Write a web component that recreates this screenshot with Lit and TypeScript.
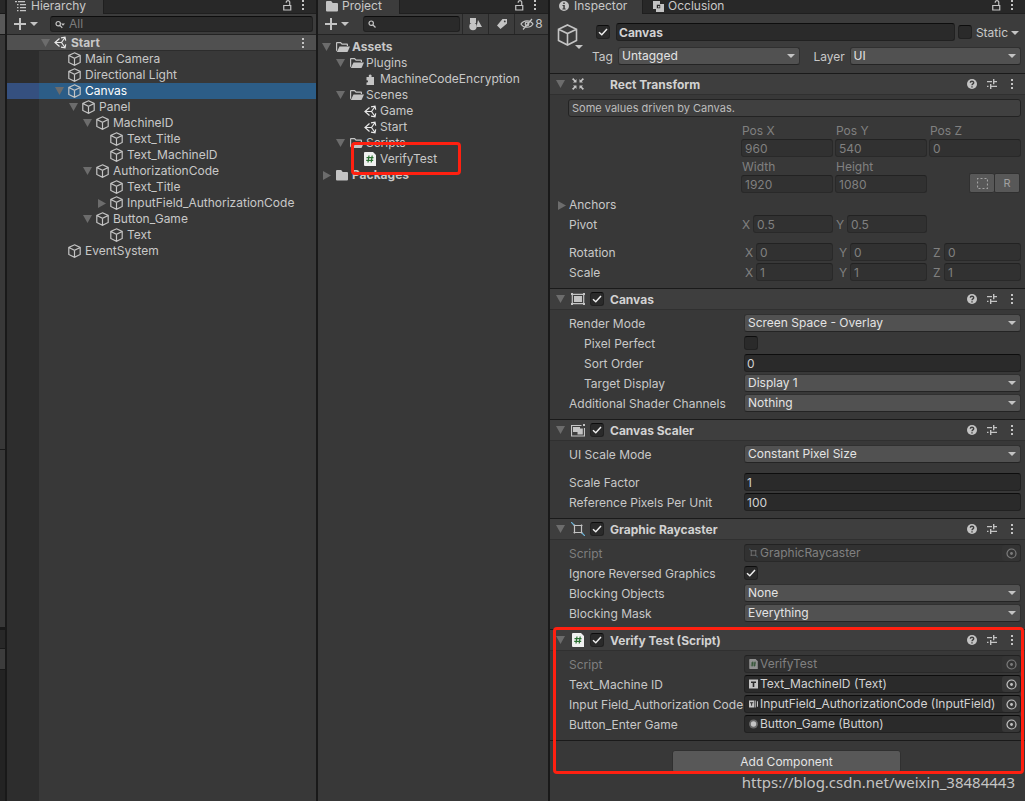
import { LitElement, html, css, nothing, TemplateResult } from "lit";
import { customElement } from "lit/decorators.js";
import { classMap } from "lit/directives/class-map.js";

const icons: Record<string, () => TemplateResult> = {
  down: () => html`<svg class="ico fold" width="9" height="8" viewBox="0 0 9 8"><path d="M0 0h9L4.5 8z" /></svg>`,
  right: () => html`<svg class="ico fold" width="9" height="9" viewBox="0 0 9 9"><path d="M1 0v9l8-4.500z" /></svg>`,
  caret: () => html`<svg class="ico caret" width="8" height="4" viewBox="0 0 8 4"><path d="M0 0h8L4 4z" /></svg>`,
  plus: () => html`<svg class="ico" width="12" height="12" viewBox="0 0 12 12"><path d="M5 0h2v5h5v2H7v5H5V7H0V5h5z" /></svg>`,
  kebab: () => html`<svg class="ico" width="4" height="12" viewBox="0 0 4 12"><path d="M1 1h2v2H1zM1 5h2v2H1zM1 9h2v2H1z" /></svg>`,
  lock: () => html`<svg class="ico line" width="9" height="11" viewBox="0 0 9 11"><path d="M.75 5.500h7v4.500h-7zM6.750 5.500V2a1.800 1.800 0 0 0-3.500 0v.8" /></svg>`,
  list: () => html`<svg class="ico" width="11" height="11" viewBox="0 0 11 11"><path d="M0 0h2v1.200H0zM3 0h7v1.200H3zM2 3h1.500v1.200H2zM5 3h6v1.200H5zM2 6h1.500v1.200H2zM5 6h6v1.200H5zM2 9h1.500v1.200H2zM5 9h6v1.200H5z" /></svg>`,
  search: () => html`<svg class="ico line" width="9" height="9" viewBox="0 0 9 9"><circle cx="3.200" cy="3.200" r="2.200" /><path d="M5 5l2.500 2.500" /></svg>`,
  searchMenu: () => html`<svg class="ico line" width="10" height="9" viewBox="0 0 10 9"><circle cx="3.200" cy="3.700" r="2.200" /><path d="M5 5.500l2.300 2.300" /><path class="solid" d="M6 3.500h4L8 5.700z" /></svg>`,
  cube: () => html`<svg class="ico line" width="13" height="14" viewBox="0 0 13 14"><path d="M6.500 .8l5.700 2.700v7L6.500 13.300 .8 10.500v-7zM.8 3.500l5.700 2.800 5.700-2.800M6.500 6.300v7" /></svg>`,
  bigCube: () => html`<svg class="ico line" width="21" height="22" viewBox="0 0 21 22"><path stroke-width="1.600" d="M10.500 1l9 4.300v11.200l-9 4.500-9-4.500V5.300zM1.500 5.300l9 4.200 9-4.200M10.500 9.500V21" /></svg>`,
  unity: () => html`<svg class="ico unity" width="13" height="13" viewBox="0 0 13 13"><path d="M5.500 2.500L1 6.500l4.500 4M1 6.500h6.500L11 1.500M7.500 6.500L11 11.500M7 1.800l4-.6.700 3.500M7 11.200l4 .6.700-3.500" /></svg>`,
  folder: () => html`<svg class="ico" width="13" height="12" viewBox="0 0 13 12"><path d="M1 1h4.200l1.500 2H11a1 1 0 0 1 1 1v6.500a1 1 0 0 1-1 1H1a1 1 0 0 1-1-1V2a1 1 0 0 1 1-1z" /></svg>`,
  folderOpen: () => html`<svg class="ico" width="14" height="12" viewBox="0 0 14 12"><path d="M1 1h3.800l1.500 1.600H11a1 1 0 0 1 1 1V5h-1.200V3.800h-5L4.300 2.200H1.200V9L0 10.500V2a1 1 0 0 1 1-1z" /><path d="M3.500 5.500H14L11.500 11H.8z" /></svg>`,
  puzzle: () => html`<svg class="ico" width="13" height="13" viewBox="0 0 13 13"><path d="M2.500 4H5c-.7-1.400 0-2.500 1.200-2.500S8.100 2.600 7.400 4H10v8H2.500V9.500c1.900.5 2.300-2.600 0-2.200z" /></svg>`,
  script: () => html`<svg class="ico" width="12" height="14" viewBox="0 0 12 14"><path class="paper" d="M1 0h8l3 3v11H1a1 1 0 0 1-1-1V1a1 1 0 0 1 1-1z" /><path class="hash" d="M5 3.500L4 10.500M8.200 3.500l-1 7M2.500 5.700h7M2.200 8.400h7" /></svg>`,
  shapes: () => html`<svg class="ico" width="13" height="14" viewBox="0 0 13 14"><path d="M1 1h6v5H1zM9 3l4 7H7.500z" /><circle cx="4" cy="9.500" r="3.700" /></svg>`,
  tag: () => html`<svg class="ico" width="12" height="12" viewBox="0 0 12 12"><path fill-rule="evenodd" d="M6.500 1H11v4.500L4.500 11 1 7.500zM8.700 2.500a.9.900 0 1 0 .1 1.800.9.900 0 0 0 0-1.800z" /></svg>`,
  eyeOff: () => html`<svg class="ico line" width="14" height="12" viewBox="0 0 14 12"><path d="M1 6c2.500-4.300 9.500-4.300 12 0-2.500 4.300-9.500 4.300-12 0zM12 1L3 11.500" /><circle cx="7" cy="6" r="1.800" /></svg>`,
  info: () => html`<svg class="ico" width="10" height="10" viewBox="0 0 10 10"><path fill-rule="evenodd" d="M5 0a5 5 0 1 0 0 10A5 5 0 0 0 5 0zM4.200 1.500h1.600v1.600H4.200zM3.500 4h2.300v3.500h.9v1H3.400v-1h.9V5h-.8z" /></svg>`,
  occlusion: () => html`<svg class="ico" width="11" height="11" viewBox="0 0 11 11"><path fill-rule="evenodd" d="M0 0h7v3h4v8H3V8H0zM3.800 3.800v3.400h3.400V3.800z" /><path d="M5 5h1.500v1.500H5z" /></svg>`,
  help: () => html`<svg class="ico" width="10" height="10" viewBox="0 0 10 10"><circle cx="5" cy="5" r="5" /><path class="ink" d="M3.300 3.800C3.300 1.700 6.700 1.800 6.700 3.700 6.700 4.900 5 4.800 5 6.200M5 7.200v1.300" /></svg>`,
  sliders: () => html`<svg class="ico" width="10" height="10" viewBox="0 0 10 10"><path d="M0 2h5v1.200H0zM6 0h1.400v2H10v1.200H7.400v2H6zM0 6.800h1.500V8H0zM3 5h1.400v1.800H10V8H4.400v2H3z" /></svg>`,
  rect: () => html`<svg class="ico" width="14" height="14" viewBox="0 0 14 14"><path d="M5.500 5.500H2l1.200-1.200L1 2.300 2.300 1l2 2.200L5.500 2zM8.500 5.500V2l1.200 1.200 2-2.200L13 2.300l-2.200 2L12 5.500zM5.500 8.500V12l-1.200-1.200-2 2.200L1 11.700l2.200-2L2 8.500zM8.500 8.500H12l-1.200 1.200 2.200 2-1.300 1.300-2-2.200L8.500 12z" /></svg>`,
  canvas: () => html`<svg class="ico" width="14" height="12" viewBox="0 0 14 12"><path d="M3 3h8v6H3z" /><path fill-rule="evenodd" d="M0 0h2v.7h10V0h2v2h-.7v8h.7v2h-2v-.7H2v.7H0v-2h.7V2H0zM1.900 1.900v8.200h10.200V1.900z" /></svg>`,
  scaler: () => html`<svg class="ico" width="14" height="13" viewBox="0 0 14 13"><path fill-rule="evenodd" d="M0 1h10.500v1.100H1.100v9.300h11.800V4H14v8.500H0z" /><path d="M2 3h7v1.500h2.800v6H6.500V8H2z" /><path d="M12 0h2v2h-2z" /></svg>`,
  raycaster: () => html`<svg class="ico line" width="14" height="14" viewBox="0 0 14 14"><path d="M2.500 3.500h9M2.500 10.500h9M3.500 2.500v9M10.500 2.500v9" /><path class="blue" d="M0 0l3 3M11 11l3 3" /></svg>`,
  text: () => html`<svg class="ico" width="9" height="9" viewBox="0 0 9 9"><path fill-rule="evenodd" d="M0 0h9v9H0zM2 2v1.400h1.700V7.500h1.600V3.400H7V2z" /></svg>`,
  input: () => html`<svg class="ico" width="9" height="9" viewBox="0 0 10 8"><path fill-rule="evenodd" d="M0 0h6v8H0zM1.200 2v1.200h1.200V6h1.100V3.200h1.200V2z" /><path d="M7 0h.8v8H7zM8.800 1H10v6H8.800z" /></svg>`,
  button: () => html`<svg class="ico" width="9" height="9" viewBox="0 0 9 9"><circle class="halo" cx="4.500" cy="4.500" r="4.500" /><circle cx="4.500" cy="4.500" r="2.700" /></svg>`,
  picker: () => html`<svg class="ico line" width="11" height="11" viewBox="0 0 11 11"><circle cx="5.500" cy="5.500" r="4.500" /><circle class="solid" cx="5.500" cy="5.500" r="1.400" /></svg>`,
  dashed: () => html`<svg class="ico line" width="11" height="11" viewBox="0 0 11 11"><path stroke-dasharray="2 2" d="M.5 1.500v-1h10v10H.5z" /></svg>`,
};

interface Node {
  name: string;
  depth: number;
  icon: string;
  fold?: "down" | "right";
  kind?: string;
}

const hierarchy: Node[] = [
  { name: "Start", depth: 0, icon: "unity", fold: "down", kind: "scene" },
  { name: "Main Camera", depth: 1, icon: "cube" },
  { name: "Directional Light", depth: 1, icon: "cube" },
  { name: "Canvas", depth: 1, icon: "cube", fold: "down", kind: "selected" },
  { name: "Panel", depth: 2, icon: "cube", fold: "down" },
  { name: "MachineID", depth: 3, icon: "cube", fold: "down" },
  { name: "Text_Title", depth: 4, icon: "cube" },
  { name: "Text_MachineID", depth: 4, icon: "cube" },
  { name: "AuthorizationCode", depth: 3, icon: "cube", fold: "down" },
  { name: "Text_Title", depth: 4, icon: "cube" },
  { name: "InputField_AuthorizationCode", depth: 4, icon: "cube", fold: "right" },
  { name: "Button_Game", depth: 3, icon: "cube", fold: "down" },
  { name: "Text", depth: 4, icon: "cube" },
  { name: "EventSystem", depth: 1, icon: "cube" },
];

const assets: Node[] = [
  { name: "Assets", depth: 0, icon: "folderOpen", fold: "down", kind: "top" },
  { name: "Plugins", depth: 1, icon: "folderOpen", fold: "down" },
  { name: "MachineCodeEncryption", depth: 2, icon: "puzzle" },
  { name: "Scenes", depth: 1, icon: "folderOpen", fold: "down" },
  { name: "Game", depth: 2, icon: "unity" },
  { name: "Start", depth: 2, icon: "unity" },
  { name: "Scripts", depth: 1, icon: "folderOpen", fold: "down" },
  { name: "VerifyTest", depth: 2, icon: "script", kind: "marked" },
  { name: "Packages", depth: 0, icon: "folder", fold: "right", kind: "top" },
];

@customElement("app-root")
export class AppRoot extends LitElement {
  static styles = css`
    :host {
      display: block;
      height: 100vh;
      overflow: hidden;
      background: #191919;
      color: #c8c8c8;
      font: 12px/16px Inter, "Liberation Sans", sans-serif;
    }
    * { box-sizing: border-box; }
    button, input, select { font: inherit; color: inherit; margin: 0; padding: 0; border: 0; background: none; border-radius: 3px; min-width: 0; }
    .ico { display: block; flex: none; fill: #c4c4c4; }
    .ico.fold { fill: #6c6c6c; }
    .ico.line { fill: none; stroke: #c4c4c4; stroke-width: 1.2; }
    .ico.unity { fill: none; stroke: #e8e8e8; stroke-width: 1.2; }
    .ico .solid { fill: #c4c4c4; stroke: none; }
    .paper { fill: #f0f0f0; }
    .hash { fill: none; stroke: #2b7032; stroke-width: 1.2; }
    .ink { fill: none; stroke: #3e3e3e; stroke-width: 1.4; }
    .blue { stroke: #6cb4d8; }
    .halo { opacity: 0.4; }

    .editor { display: grid; height: 100%; column-gap: 2px; grid-template-columns: 5px minmax(0, 309fr) minmax(0, 230fr) minmax(0, 475fr); }
    .panel { display: flex; flex-direction: column; min-width: 0; background: #383838; position: relative; }

    .edge { display: flex; flex-direction: column; gap: 1px; }
    .edge div { background: #383838; }
    .edge .e-tab { height: 13px; background: #282828; }
    .edge .e-bar { height: 20px; background: #585858; }
    .edge .e-mid { flex: 413; }
    .edge .e-low { flex: 177; margin-bottom: 2px; }
    .edge .e-tab2 { height: 18px; background: #282828; }
    .edge .e-bar2 { height: 20px; background: #3c3c3c; }
    .edge .e-end { flex: 131; background: #232323; }

    .tabs { display: flex; flex: none; height: 14px; background: #282828; border-bottom: 1px solid #1f1f1f; line-height: 12px; }
    .tab { display: flex; align-items: center; gap: 6px; height: 14px; padding-bottom: 2px; }
    .tab.on { background: #3c3c3c; border-right: 1px solid #1f1f1f; }
    .tab.hier { width: 97px; padding-left: 8px; gap: 5px; }
    .tab.proj { width: 82px; padding-left: 8px; gap: 3px; }
    .tab.insp { width: 93px; padding-left: 9px; gap: 5px; }
    .tab.occ { padding-left: 10px; gap: 4px; }
    .tools { display: flex; align-items: center; gap: 9px; margin-left: auto; padding: 0 11px 3px 0; }
    .tools button, .bar button { display: flex; align-items: center; }

    .bar { display: flex; flex: none; align-items: center; height: 21px; background: #3c3c3c; border-bottom: 1px solid #232323; padding-left: 7px; }
    .add { gap: 4px; flex: none; }
    .search { display: flex; align-items: center; gap: 4px; flex: 1; min-width: 0; height: 16px; padding-left: 4px; background: #2a2a2a; border: 1px solid #212121; border-top-color: #0d0d0d; border-radius: 3px; }
    .search input { flex: 1; line-height: 14px; }
    .search input::placeholder { color: #7c7c7c; opacity: 1; }
    .hier-search { margin: 0 3px 0 12px; }
    .proj-search { margin: 0 2px 0 14px; }
    .bar .tool { justify-content: center; flex: none; width: 26px; height: 20px; border-left: 1px solid #282828; border-radius: 0; }
    .bar .tool.wide { width: 34px; gap: 1px; }

    .tree { margin: 0; padding: 0; list-style: none; }
    .tree.fill { flex: 1; background: linear-gradient(to right, #2d2d2d 32px, transparent 32px); }
    .tree.assets { padding-top: 4px; }
    .node { display: flex; align-items: center; height: 16px; padding-right: 11px; position: relative; white-space: nowrap; }
    .gutter { flex: none; width: 34px; height: 16px; }
    .tree.assets .gutter { width: 4px; }
    .arrow { flex: none; width: 13px; }
    .tree.assets .arrow { width: 14px; }
    .pic { display: flex; flex: none; width: 17px; }
    .tree.assets .pic { width: 16px; }
    .node .kebab { margin-left: auto; }
    .scene { background: #505050; font-weight: 700; border-bottom: 1px solid #2c2c2c; }
    .top { font-weight: 700; }
    .selected { background: linear-gradient(to right, #35507f 32px, #2c5d87 32px); color: #fff; }
    .mark { position: absolute; border: 3px solid #ff2010; border-radius: 4px; pointer-events: none; z-index: 2; }
    .marked .mark { left: 33px; top: -9px; width: 110px; height: 33px; }
    .region { position: relative; }
    .region .mark { inset: -2px 1px auto 3px; height: 147px; }

    .head { display: flex; flex: none; gap: 7px; height: 59px; padding: 9px 4px 0 7px; background: #3c3c3c; }
    .head-icon { display: flex; flex-direction: column; align-items: flex-end; flex: none; width: 26px; padding-top: 1px; }
    .head-icon .ico.line { margin-right: auto; }
    .head-icon .caret { margin-top: -1px; }
    .head-main { display: flex; flex-direction: column; gap: 6px; flex: 1; min-width: 0; }
    .head-row { display: flex; align-items: center; height: 18px; }
    .head-row .name { flex: 1; margin: 0 3px 0 6px; padding-left: 2px; font-weight: 700; }
    .head-row .first { margin-left: 6px; }
    .head-row .static { display: flex; align-items: center; gap: 3px; margin-left: 4px; padding: 1px 2px 0 0; }
    .head-row .cap { flex: none; padding: 1px 0 0 2px; width: 28px; }
    .head-row .cap.layer { margin-left: 14px; padding-left: 0; width: 36px; }
    .head-row .pick { flex: 181; }
    .head-row .pick.narrow { flex: 171; }

    .check { appearance: none; flex: none; width: 14px; height: 14px; background: #2a2a2a; border: 1px solid #212121; border-top-color: #0d0d0d; border-radius: 3px; }
    .check:checked { background: #2a2a2a url('data:image/svg+xml,<svg xmlns="http://www.w3.org/2000/svg" viewBox="0 0 12 12"><path d="M2 6.200l2.800 2.600L10 3" fill="none" stroke="%23eee" stroke-width="1.500"/></svg>') center / 12px 12px no-repeat; }
    .field { width: 100%; height: 18px; padding: 0 2px; line-height: 16px; background: #2a2a2a; border: 1px solid #212121; border-top-color: #0d0d0d; border-radius: 3px; color: #d2d2d2; }
    .field:disabled { padding: 0 3px; background: #313131; border-color: #292929; border-top-color: #222; color: #808080; }
    .pick { display: grid; align-items: center; width: 100%; height: 18px; }
    .pick select { grid-area: 1 / 1; appearance: none; width: 100%; height: 18px; padding: 0 20px 1px 3px; line-height: 14px; background: #515151; border: 1px solid #303030; border-bottom-color: #242424; color: #e4e4e4; }
    .pick .caret { grid-area: 1 / 1; justify-self: end; margin-right: 5px; pointer-events: none; }

    .comp { border-top: 1px solid #1a1a1a; }
    .comp-head { display: flex; align-items: center; height: 21px; padding: 0 3px 0 6px; background: #3e3e3e; border-bottom: 1px solid #303030; }
    .comp-head .kind { display: flex; justify-content: center; width: 14px; margin: 0 5px 0 6px; }
    .comp-head .slot { width: 14px; height: 14px; }
    .comp-head h2 { margin: 0 auto 0 6px; padding-top: 2px; font: inherit; font-weight: 700; color: #d2d2d2; }
    .comp-head button { display: flex; justify-content: center; width: 20px; }
    .comp-body { padding: 3px 4px 6px 19px; }
    .row { display: grid; grid-template-columns: minmax(0, 175fr) minmax(0, 277fr); align-items: center; height: 20px; white-space: nowrap; }
    .row.sub > :first-child { padding-left: 15px; }
    .row.gap { margin-top: 8px; }
    .row.dim > label { color: #7f7f7f; }
    .row label { padding-top: 1px; }
    .object { display: flex; align-items: center; height: 18px; padding-left: 3px; background: #2a2a2a; border: 1px solid #212121; border-top-color: #0d0d0d; border-radius: 3px; color: #d2d2d2; }
    .object .ref { display: flex; justify-content: center; flex: none; width: 10px; margin-right: 2px; }
    .object .ref .ico { width: 9px; height: 10px; }
    .object input { flex: 1; line-height: 16px; }
    .object button { display: flex; align-items: center; justify-content: center; flex: none; width: 18px; height: 16px; background: #373737; }
    .dim .object { background: #313131; border-color: #292929; border-top-color: #222; color: #808080; }
    .dim .object .ico { opacity: 0.5; }
    .dim .object button { background: #343434; }

    .comp-body.rect { padding-top: 4px; }
    .notice { height: 18px; margin: 0 0 6px; padding: 0 3px; font-size: 11px; line-height: 17px; background: #404040; border: 1px solid #232323; border-radius: 3px; margin-left: -1px; color: #bdbdbd; }
    .grid { display: grid; grid-template-columns: minmax(0, 172fr) repeat(3, minmax(0, 92fr)); column-gap: 2px; margin-left: -2px; }
    .grid .cell { display: flex; flex-direction: column; color: #808080; }
    .grid .cell.lower { padding-top: 2px; }
    .grid .cell label { height: 16px; padding-left: 1px; }
    .grid .first { grid-column: 2; }
    .modes { display: flex; justify-content: flex-end; align-items: flex-end; padding-right: 1px; }
    .modes button { display: flex; align-items: center; justify-content: center; width: 26px; height: 20px; background: #585858; border: 1px solid #303030; border-radius: 2px; color: #a0a0a0; font-size: 11px; }
    .modes button:first-child { width: 25px; border-right: 0; }
    .modes .ico { opacity: 0.7; }
    .anchors { display: flex; align-items: center; gap: 3px; height: 20px; margin: 1px 0 0 -12px; padding-top: 2px; }
    .axes { display: grid; grid-template-columns: minmax(0, 172fr) repeat(3, minmax(0, 92fr)); column-gap: 2px; margin-left: -2px; align-items: center; height: 20px; }
    .axes.gap { margin-top: 8px; }
    .axes .title { padding: 2px 0 0 2px; }
    .axis { display: flex; align-items: center; color: #808080; }
    .axis label { flex: none; width: 12px; padding: 1px 0 0 1px; }
    .axes.inset .axis label { width: 15px; padding-left: 4px; }

    .footer { display: flex; justify-content: center; padding: 9px 2px 0 0; border-top: 1px solid #1a1a1a; }
    .footer button { width: 229px; height: 23px; background: #585858; border: 1px solid #303030; color: #e4e4e4; }
    .credit { position: absolute; right: 10px; bottom: 8px; z-index: 3; font: 15px/22px "Noto Sans", sans-serif; color: #c4c4c4; white-space: nowrap; }
  `;

  private icon(name: string) {
    return icons[name]();
  }

  private node(n: Node) {
    return html`<li class="node ${n.kind ?? ""}">
      <span class="gutter"></span>
      <span style="width:${n.depth * 14}px"></span>
      <span class="arrow">${n.fold ? this.icon(n.fold) : nothing}</span>
      <span class="pic">${this.icon(n.icon)}</span>
      <span>${n.name}</span>
      ${n.kind === "scene" ? html`<span class="kebab">${this.icon("kebab")}</span>` : nothing}
      ${n.kind === "marked" ? html`<span class="mark"></span>` : nothing}
    </li>`;
  }

  private tools() {
    return html`<div class="tools">
      <button aria-label="Lock">${this.icon("lock")}</button>
      <button aria-label="Panel menu">${this.icon("kebab")}</button>
    </div>`;
  }

  private select(id: string, value: string, extra = "") {
    return html`<div class="pick ${extra}">
      <select id=${id}><option>${value}</option></select>
      ${this.icon("caret")}
    </div>`;
  }

  private id(label: string, scope: string) {
    return `${scope}-${label.toLowerCase().replace(/\W+/g, "-")}`;
  }

  private row(scope: string, label: string, control: (id: string) => TemplateResult, mods = "") {
    const id = this.id(label, scope);
    return html`<div class="row ${mods}"><label for=${id}>${label}</label>${control(id)}</div>`;
  }

  private object(icon: string, value: string) {
    return (id: string) => html`<div class="object">
      <span class="ref">${this.icon(icon)}</span>
      <input id=${id} readonly .value=${value} />
      <button aria-label="Select object">${this.icon("picker")}</button>
    </div>`;
  }

  private choice(value: string) {
    return (id: string) => this.select(id, value);
  }

  private field(value: string) {
    return (id: string) => html`<input class="field" id=${id} .value=${value} />`;
  }

  private toggle(on: boolean) {
    return (id: string) => html`<input class="check" type="checkbox" id=${id} .checked=${on} />`;
  }

  private component(title: string, icon: string, body: TemplateResult, toggle = true, mods = {}) {
    return html`<section class="comp">
      <header class="comp-head">
        ${this.icon("down")}
        <span class="kind">${this.icon(icon)}</span>
        ${toggle
          ? html`<input class="check" type="checkbox" aria-label="Enable ${title}" .checked=${true} />`
          : html`<span class="slot"></span>`}
        <h2>${title}</h2>
        <button aria-label="Help">${this.icon("help")}</button>
        <button aria-label="Presets">${this.icon("sliders")}</button>
        <button aria-label="More">${this.icon("kebab")}</button>
      </header>
      <div class="comp-body ${classMap(mods)}">${body}</div>
    </section>`;
  }

  private cell(label: string, value: string, mods = "") {
    const id = this.id(label, "rect");
    return html`<div class="cell ${mods}"><label for=${id}>${label}</label>
      <input class="field" id=${id} disabled .value=${value} /></div>`;
  }

  private axes(title: string, values: string[], mods = "") {
    return html`<div class="axes ${mods}"><span class="title">${title}</span>
      ${values.map((v, i) => {
        const id = this.id("XYZ"[i], title);
        return html`<div class="axis"><label for=${id}>${"XYZ"[i]}</label><input class="field" id=${id} disabled .value=${v} /></div>`;
      })}
    </div>`;
  }

  private rectTransform() {
    return html`
      <p class="notice">Some values driven by Canvas.</p>
      <div class="grid">
        ${this.cell("Pos X", "960", "first")}${this.cell("Pos Y", "540")}${this.cell("Pos Z", "0")}
        ${this.cell("Width", "1920", "first lower")}${this.cell("Height", "1080", "lower")}
        <div class="modes"><button aria-label="Blueprint mode">${this.icon("dashed")}</button><button>R</button></div>
      </div>
      <div class="anchors">${this.icon("right")}<span>Anchors</span></div>
      ${this.axes("Pivot", ["0.5", "0.5"])}
      ${this.axes("Rotation", ["0", "0", "0"], "inset gap")}
      ${this.axes("Scale", ["1", "1", "1"], "inset")}
    `;
  }

  render() {
    return html`<main class="editor">
      <div class="edge">
        <div class="e-tab"></div><div class="e-bar"></div><div class="e-mid"></div><div class="e-low"></div>
        <div class="e-tab2"></div><div class="e-bar2"></div><div class="e-end"></div>
      </div>

      <section class="panel">
        <div class="tabs"><div class="tab on hier">${this.icon("list")}Hierarchy</div>${this.tools()}</div>
        <div class="bar">
          <button class="add" aria-label="Create">${this.icon("plus")}${this.icon("caret")}</button>
          <div class="search hier-search">${this.icon("searchMenu")}<input placeholder="All" aria-label="Search hierarchy" /></div>
        </div>
        <ul class="tree fill">${hierarchy.map((n) => this.node(n))}</ul>
      </section>

      <section class="panel">
        <div class="tabs"><div class="tab on proj">${this.icon("folder")}Project</div>${this.tools()}</div>
        <div class="bar">
          <button class="add" aria-label="Create asset">${this.icon("plus")}${this.icon("caret")}</button>
          <div class="search proj-search">${this.icon("search")}<input aria-label="Search project" /></div>
          <button class="tool" aria-label="Search by type">${this.icon("shapes")}</button>
          <button class="tool" aria-label="Search by label">${this.icon("tag")}</button>
          <button class="tool wide">${this.icon("eyeOff")}8</button>
        </div>
        <ul class="tree assets">${assets.map((n) => this.node(n))}</ul>
      </section>

      <section class="panel">
        <div class="tabs">
          <div class="tab on insp">${this.icon("info")}Inspector</div>
          <div class="tab occ">${this.icon("occlusion")}Occlusion</div>
          ${this.tools()}
        </div>
        <div class="head">
          <div class="head-icon">${this.icon("bigCube")}${this.icon("caret")}</div>
          <div class="head-main">
            <div class="head-row">
              <input class="check first" type="checkbox" aria-label="Active" .checked=${true} />
              <input class="field name" aria-label="Name" .value=${"Canvas"} />
              <input class="check" type="checkbox" id="static" />
              <label class="static" for="static">Static${this.icon("caret")}</label>
            </div>
            <div class="head-row">
              <label class="cap" for="tag">Tag</label>${this.select("tag", "Untagged")}
              <label class="cap layer" for="layer">Layer</label>${this.select("layer", "UI", "narrow")}
            </div>
          </div>
        </div>
        ${this.component("Rect Transform", "rect", this.rectTransform(), false, { rect: true })}
        ${this.component("Canvas", "canvas", html`
          ${this.row("canvas", "Render Mode", this.choice("Screen Space - Overlay"))}
          ${this.row("canvas", "Pixel Perfect", this.toggle(false), "sub")}
          ${this.row("canvas", "Sort Order", this.field("0"), "sub")}
          ${this.row("canvas", "Target Display", this.choice("Display 1"), "sub")}
          ${this.row("canvas", "Additional Shader Channels", this.choice("Nothing"))}
        `)}
        ${this.component("Canvas Scaler", "scaler", html`
          ${this.row("scaler", "UI Scale Mode", this.choice("Constant Pixel Size"))}
          ${this.row("scaler", "Scale Factor", this.field("1"), "gap")}
          ${this.row("scaler", "Reference Pixels Per Unit", this.field("100"))}
        `)}
        ${this.component("Graphic Raycaster", "raycaster", html`
          ${this.row("raycaster", "Script", this.object("raycaster", "GraphicRaycaster"), "dim")}
          ${this.row("raycaster", "Ignore Reversed Graphics", this.toggle(true))}
          ${this.row("raycaster", "Blocking Objects", this.choice("None"))}
          ${this.row("raycaster", "Blocking Mask", this.choice("Everything"))}
        `)}
        <div class="region">
          ${this.component("Verify Test (Script)", "script", html`
            ${this.row("verify", "Script", this.object("script", "VerifyTest"), "dim")}
            ${this.row("verify", "Text_Machine ID", this.object("text", "Text_MachineID (Text)"))}
            ${this.row("verify", "Input Field_Authorization Code", this.object("input", "InputField_AuthorizationCode (InputField)"))}
            ${this.row("verify", "Button_Enter Game", this.object("button", "Button_Game (Button)"))}
          `)}
          <div class="footer"><button>Add Component</button></div>
          <div class="mark"></div>
        </div>
        <div class="credit">https://blog.csdn.net/weixin_38484443</div>
      </section>
    </main>`;
  }
}
